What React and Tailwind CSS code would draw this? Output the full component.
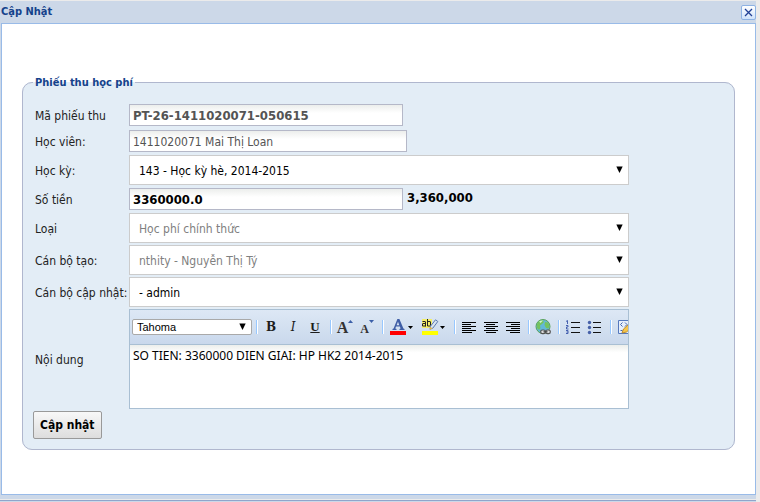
import { useState } from "react";

const inputBase =
  "block h-[22px] border border-[#b5b8c8] bg-white bg-linear-to-b from-[#eceeec] from-0% to-white to-40% pl-[3px] outline-none";

function Caret({ className }) {
  return (
    <svg viewBox="0 0 7 7" className={`pointer-events-none absolute h-[7px] w-[7px] ${className}`} aria-hidden="true">
      <path d="M0.300 0.500h6.400L3.500 7z" fill="#000" />
    </svg>
  );
}

function Label({ id, children }) {
  return (
    <label htmlFor={id} className="self-center pt-px pl-[2px] whitespace-nowrap text-[#222]">
      {children}
    </label>
  );
}

function SelectRow({ id, label, value, muted }) {
  return (
    <>
      <Label id={id}>{label}</Label>
      <div className="relative w-[500px] max-w-full">
        <select
          id={id}
          className={`block h-[30px] w-full appearance-none border border-[#cccccc] bg-white pt-px pl-[9px] outline-none ${
            muted ? "text-[#808080]" : "text-black"
          }`}
        >
          <option>{value}</option>
        </select>
        <Caret className="top-[11px] right-[6px]" />
      </div>
    </>
  );
}

function Separator() {
  return (
    <span className="h-[14px] w-2 shrink-0 pl-1">
      <span className="block h-full w-[2px] border-r border-white bg-[#98c8ff]" />
    </span>
  );
}

function Tool({ name, wide, children }) {
  return (
    <button
      type="button"
      aria-label={name}
      className={`flex h-[22px] shrink-0 items-center justify-center ${wide ? "w-8" : "w-[22px]"}`}
    >
      {children}
    </button>
  );
}

function Icon({ wide, children }) {
  return (
    <svg viewBox={wide ? "0 0 24 16" : "0 0 16 16"} className={wide ? "h-4 w-6" : "h-4 w-4"} aria-hidden="true">
      {children}
    </svg>
  );
}

function AlignIcon({ align }) {
  const rows = [14, 9, 14, 9, 14, 10];
  return (
    <Icon>
      {rows.map((w, i) => {
        const x = align === "left" ? 1 : align === "right" ? 15 - w : 1 + Math.floor((14 - w) / 2);
        return <rect key={i} x={x} y={3 + i * 2} width={w} height="1" fill="#000" />;
      })}
    </Icon>
  );
}

function Toolbar() {
  return (
    <div className="flex h-[36px] items-center overflow-hidden border border-[#a9bfd3] bg-linear-to-b from-[#dde8f5] to-[#c9d8ec] pl-[2px]">
      <div className="relative w-[120px] shrink-0">
        <select
          aria-label="Font"
          className="block h-4 w-full appearance-none rounded-xs border border-[#a9a9a9] bg-white pl-1 font-['Liberation_Sans',sans-serif] text-[11px] leading-3 text-black outline-none"
        >
          <option>Tahoma</option>
        </select>
        <Caret className="top-[4px] right-[6px]" />
      </div>
      <Separator />
      <Tool name="Bold">
        <span className="font-['DejaVu_Serif',serif] text-xs leading-4 font-bold text-[#1c1c1c]">B</span>
      </Tool>
      <Tool name="Italic">
        <span className="font-['DejaVu_Serif',serif] text-xs leading-4 text-[#1c1c1c] italic">I</span>
      </Tool>
      <Tool name="Underline">
        <span className="font-['Liberation_Serif',serif] text-[13px] leading-4 font-bold text-[#1c1c1c] underline">U</span>
      </Tool>
      <Separator />
      <Tool name="Grow text">
        <span className="pt-px font-['Liberation_Serif',serif] text-base leading-4 font-bold text-[#333]">A</span>
        <svg viewBox="0 0 5 3" className="mb-3 h-[3px] w-[5px]" aria-hidden="true">
          <path d="M0 3L2.500 0 5 3z" fill="#3b5fa8" />
        </svg>
      </Tool>
      <Tool name="Shrink text">
        <span className="pt-1 font-['Liberation_Serif',serif] text-xs leading-3 font-bold text-[#333]">A</span>
        <svg viewBox="0 0 5 3" className="mb-3 h-[3px] w-[5px]" aria-hidden="true">
          <path d="M0 0L2.500 3 5 0z" fill="#3b5fa8" />
        </svg>
      </Tool>
      <Separator />
      <Tool name="Font color" wide>
        <Icon wide>
          <path
            d="M7.400 0h2l4 9.500 1.100.4v1.100h-5v-1.100l1.100-.4-.7-1.900H6l-.7 1.900 1.200.4v1.100H2.500v-1.100l1.100-.4zM8 2.800L6.600 6.200h2.700z"
            fill="#3f5ea6"
          />
          <rect x="0" y="12" width="16" height="4" fill="#f00" />
          <path d="M18 7h5l-2.500 3z" fill="#000" />
        </Icon>
      </Tool>
      <Tool name="Highlight color" wide>
        <Icon wide>
          <rect x="0" y="0" width="10" height="9" fill="#f4ef6a" />
          <g fill="none" stroke="#222" strokeWidth="1">
            <path d="M0.500 2.500h2.500q.5 0 .5.500V7.500M3.500 4.500H1q-.5 0-.5.500v2h3" />
            <path d="M5.500 0v7h2.500q.5 0 .5-.5V3q0-.5-.5-.5H5.500" />
          </g>
          <path d="M13.500 0.800l2.300 1.700-5 6.700-2.700 1 .4-3z" fill="#d9e4f2" stroke="#5b79ad" />
          <path d="M7.500 11l3-1.500-2-1.700z" fill="#e6b84a" />
          <rect x="0" y="12" width="16" height="4" fill="#ff0" />
          <path d="M18 7h5l-2.500 3z" fill="#000" />
        </Icon>
      </Tool>
      <Separator />
      <Tool name="Align left"><AlignIcon align="left" /></Tool>
      <Tool name="Align center"><AlignIcon align="center" /></Tool>
      <Tool name="Align right"><AlignIcon align="right" /></Tool>
      <Separator />
      <Tool name="Hyperlink">
        <Icon>
          <circle cx="8" cy="7.500" r="7" fill="#62b8d8" stroke="#5ba35a" />
          <path d="M2 5c1-3 3.500-4 5.500-4L9 3 7 5 5 6.500 5.500 9 4 11 2 9zM10 3l3 .5 1.500 3-1 3-2.500-.5-1.500-3z" fill="#74c35f" />
          <path d="M4 2.500c1.500-1 3-1 4-1L5.500 4z" fill="#d4f3cf" />
          <rect x="5.700" y="11" width="4.600" height="3.600" rx="1.600" fill="#ddd" stroke="#555" strokeWidth="1.200" />
          <rect x="10.700" y="11" width="4.600" height="3.600" rx="1.600" fill="#ddd" stroke="#555" strokeWidth="1.200" />
          <path d="M8.500 12.800h4" stroke="#444" strokeWidth="1.200" />
        </Icon>
      </Tool>
      <Separator />
      <Tool name="Numbered list">
        <Icon>
          <g fill="none" stroke="#4560b0" strokeWidth="1">
            <path d="M1 2.500l1.500-1V5" />
            <path d="M1 6.500h2v1.500H1.500v2H3.500" />
            <path d="M1 11.500h2v3H1M1.500 13h1.500" />
          </g>
          <path d="M6 3.500h9M6 8.500h9M6 13.500h9" stroke="#111" />
        </Icon>
      </Tool>
      <Tool name="Bulleted list">
        <Icon>
          <g fill="#4560a8">
            <circle cx="2.500" cy="3.500" r="1.700" />
            <circle cx="2.500" cy="8.500" r="1.700" />
            <circle cx="2.500" cy="13.500" r="1.700" />
          </g>
          <path d="M6 3.500h8M6 8.500h8M6 13.500h8" stroke="#111" />
        </Icon>
      </Tool>
      <Separator />
      <Tool name="Source edit">
        <Icon>
          <path d="M1.500 1.500h12v13h-12z" fill="#e6effb" stroke="#5578bd" />
          <path d="M5.500 3.500L3.500 5.500l2 2M8 3.500l2 2-2 2M3.500 11.500h2" fill="none" stroke="#4265b0" />
          <path d="M5 14l1.500-4L12 5l3 3-5.500 5z" fill="#f7c64b" stroke="#b98a2c" />
        </Icon>
      </Tool>
    </div>
  );
}

export default function App() {
  const [content, setContent] = useState("SO TIEN: 3360000 DIEN GIAI: HP HK2 2014-2015");

  return (
    <div className="min-h-screen bg-[#ebebeb] pt-px pr-1 font-['DejaVu_Sans_Condensed','DejaVu_Sans',sans-serif] text-xs text-black">
      <div className="bg-[#ccd8e8] pl-px">
        <header className="flex h-[22px] items-center justify-between">
          <h1 className="text-[11px] leading-[14px] font-bold text-[#15428b]">Cập Nhật</h1>
          <button
            type="button"
            aria-label="Close"
            className="flex h-[15px] w-[15px] items-center justify-center rounded-xs border border-[#8db2e3] bg-white bg-linear-to-b from-white to-[#cfe2fa]"
          >
            <svg viewBox="0 0 9 9" className="h-[9px] w-[9px]" aria-hidden="true">
              <path d="M1 1l7 7M8 1L1 8" stroke="#1f3f94" strokeWidth="1.300" />
            </svg>
          </button>
        </header>

        <main className="border border-[#99bbe8] bg-white px-5 pt-[52px] pb-11">
          <form onSubmit={(e) => e.preventDefault()}>
            <fieldset className="min-w-0 rounded-[10px] border border-[#b0b7ce] bg-[#e3edf6] px-[10px] pb-[10px]">
              <legend className="px-[2px] text-[11px] leading-[13px] font-bold text-[#15428b]">Phiếu thu học phí</legend>

              <div className="grid grid-cols-[96px_minmax(0,1fr)] gap-y-[2px] pt-[14px]">
                <Label id="code">Mã phiếu thu</Label>
                <div className="py-px">
                  <input id="code" readOnly defaultValue="PT-26-1411020071-050615" className={`${inputBase} w-[274px] text-[13px] font-bold text-[#545454]`} />
                </div>

                <Label id="student">Học viên:</Label>
                <div className="py-px">
                  <input id="student" readOnly defaultValue="1411020071 Mai Thị Loan" className={`${inputBase} w-[278px] pt-px text-[#545454]`} />
                </div>

                <SelectRow id="term" label="Học kỳ:" value="143 - Học kỳ hè, 2014-2015" />

                <Label id="amount">Số tiền</Label>
                <div className="flex gap-1 py-px">
                  <input id="amount" defaultValue="3360000.0" className={`${inputBase} w-[274px] text-[13px] font-bold text-black`} />
                  <output htmlFor="amount" className="text-[13px] leading-5 font-bold">3,360,000</output>
                </div>

                <SelectRow id="kind" label="Loại" value="Học phí chính thức" muted />
                <SelectRow id="creator" label="Cán bộ tạo:" value="nthity - Nguyễn Thị Tý" muted />
                <SelectRow id="updater" label="Cán bộ cập nhật:" value="- admin" />

                <Label id="content">Nội dung</Label>
                <div className="w-[500px] max-w-full">
                  <Toolbar />
                  <textarea
                    id="content"
                    value={content}
                    onChange={(e) => setContent(e.target.value)}
                    className="block h-16 w-full resize-none border border-t-0 border-[#a9bfd3] bg-white bg-linear-to-b from-[#eceeec] from-0% to-white to-12% px-[3px] pt-[3px] font-['Noto_Sans',sans-serif] text-xs leading-4 outline-none"
                  />
                </div>
              </div>

              <button
                type="submit"
                className="mt-[2px] block h-7 rounded-xs border border-[#999] bg-linear-to-b from-[#f8f8f8] to-[#dddddd] px-[6px] text-xs font-bold"
              >
                Cập nhật
              </button>
            </fieldset>
          </form>
        </main>

        <div className="h-1" />
      </div>
      <div className="mt-px h-[2px] border-t border-[#8fa5cb] bg-[#ccd8e8]" />
    </div>
  );
}
